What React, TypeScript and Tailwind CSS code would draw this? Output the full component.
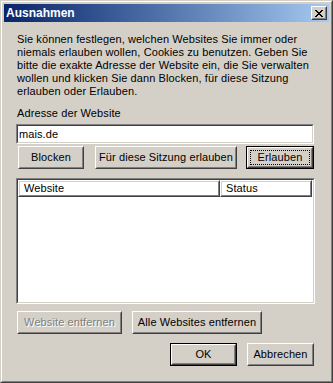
import React from 'react';

const font = { fontFamily: '"Liberation Sans", Arial, sans-serif' };

function RaisedButton({
  children,
  width,
  isDefault = false,
  focused = false,
  disabled = false,
}: {
  children: React.ReactNode;
  width: string;
  isDefault?: boolean;
  focused?: boolean;
  disabled?: boolean;
}) {
  const label = (
    <span
      className={
        disabled
          ? 'text-[#808080] [text-shadow:1px_1px_0_#ffffff]'
          : 'text-black'
      }
    >
      {children}
    </span>
  );

  if (isDefault) {
    return (
      <div className={`${width} h-[23px] border border-black bg-[#d4d0c8]`}>
        <div className="h-full border border-t-white border-l-white border-r-[#404040] border-b-[#404040]">
          <div className="h-full border border-t-[#d4d0c8] border-l-[#d4d0c8] border-r-[#808080] border-b-[#808080] p-[1px]">
            <div
              className={`h-full flex items-center justify-center border border-dotted ${
                focused ? 'border-black' : 'border-transparent'
              }`}
            >
              {label}
            </div>
          </div>
        </div>
      </div>
    );
  }

  return (
    <div
      className={`${width} h-[23px] bg-[#d4d0c8] border border-t-white border-l-white border-r-[#404040] border-b-[#404040]`}
    >
      <div className="h-full flex items-center justify-center border border-t-[#d4d0c8] border-l-[#d4d0c8] border-r-[#808080] border-b-[#808080]">
        {label}
      </div>
    </div>
  );
}

function HeaderCell({ children, width }: { children: React.ReactNode; width: string }) {
  return (
    <div
      className={`${width} h-[17px] border border-t-white border-l-white border-r-[#404040] border-b-[#404040]`}
    >
      <div className="h-full flex items-center pl-[4px] border border-t-[#d4d0c8] border-l-[#d4d0c8] border-r-[#808080] border-b-[#808080]">
        {children}
      </div>
    </div>
  );
}

export default function App() {
  return (
    <div className="w-[333px] h-[383px] text-[11px] leading-[13px] tracking-[0.1px]" style={font}>
      {/* window frame */}
      <div className="w-full h-full bg-[#d4d0c8] border border-t-[#d4d0c8] border-l-[#d4d0c8] border-r-[#404040] border-b-[#404040]">
        <div className="h-full border border-t-white border-l-white border-r-[#808080] border-b-[#808080] p-[2px] flex flex-col">
          {/* title bar */}
          <div className="h-[18px] shrink-0 flex items-center justify-between pl-[2px] pr-[2px] bg-gradient-to-r from-[#0a246a] to-[#a6caf0]">
            <span className="text-white font-bold text-[12px] tracking-normal">Ausnahmen</span>
            <div className="w-[16px] h-[14px] bg-[#d4d0c8] border border-t-white border-l-white border-r-[#404040] border-b-[#404040]">
              <div className="h-full flex items-center justify-center border border-t-[#d4d0c8] border-l-[#d4d0c8] border-r-[#808080] border-b-[#808080]">
                <svg width="8" height="7" viewBox="0 0 8 7" shapeRendering="crispEdges">
                  <path d="M0 0h2v1H0zM1 1h2v1H1zM2 2h2v1H2zM3 3h2v1H3zM2 4h2v1H2zM1 5h2v1H1zM0 6h2v1H0zM6 0h2v1H6zM5 1h2v1H5zM4 2h2v1H4zM4 4h2v1H4zM5 5h2v1H5zM6 6h2v1H6z" fill="#000" />
                </svg>
              </div>
            </div>
          </div>

          {/* client area */}
          <div className="flex-1 flex flex-col pl-[12px] pr-[14px] text-black">
            <p className="mt-[11px] pl-[1px]">
              Sie können festlegen, welchen Websites Sie immer oder
              <br />
              niemals erlauben wollen, Cookies zu benutzen. Geben Sie
              <br />
              bitte die exakte Adresse der Website ein, die Sie verwalten
              <br />
              wollen und klicken Sie dann Blocken, für diese Sitzung
              <br />
              erlauben oder Erlauben.
            </p>

            <label className="mt-[9px] pl-[1px]">Adresse der Website</label>

            <div className="mt-[4px] h-[20px] w-[298px] border border-t-[#808080] border-l-[#808080] border-r-white border-b-white">
              <div className="h-full bg-white flex items-center pl-[1px] border border-t-[#404040] border-l-[#404040] border-r-[#d4d0c8] border-b-[#d4d0c8]">
                mais.de
              </div>
            </div>

            <div className="mt-[2px] flex pl-[2px]">
              <RaisedButton width="w-[66px]">Blocken</RaisedButton>
              <div className="w-[11px]" />
              <RaisedButton width="w-[142px]">Für diese Sitzung erlauben</RaisedButton>
              <div className="w-[9px]" />
              <RaisedButton width="w-[68px]" isDefault focused>
                Erlauben
              </RaisedButton>
            </div>

            {/* list view */}
            <div className="mt-[9px] h-[126px] w-[299px] border border-t-[#808080] border-l-[#808080] border-r-white border-b-white">
              <div className="h-full bg-white border border-t-[#404040] border-l-[#404040] border-r-[#d4d0c8] border-b-[#d4d0c8]">
                <div className="flex">
                  <HeaderCell width="w-[202px]">Website</HeaderCell>
                  <HeaderCell width="w-[92px]">Status</HeaderCell>
                </div>
              </div>
            </div>

            <div className="mt-[7px] flex pl-[1px] gap-[10px]">
              <RaisedButton width="w-[105px]" disabled>
                Website entfernen
              </RaisedButton>
              <RaisedButton width="w-[130px]">Alle Websites entfernen</RaisedButton>
            </div>

            <div className="mt-[9px] flex justify-end pr-[1px] gap-[10px]">
              <RaisedButton width="w-[67px]" isDefault>
                OK
              </RaisedButton>
              <RaisedButton width="w-[67px]">Abbrechen</RaisedButton>
            </div>
          </div>
        </div>
      </div>
    </div>
  );
}
